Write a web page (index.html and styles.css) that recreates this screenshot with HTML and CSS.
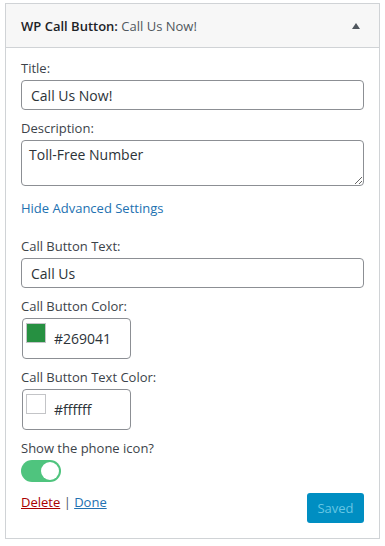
FILE: index.html
```html
<!DOCTYPE html>
<html lang="en">
<head>
    <meta charset="UTF-8">
    <meta name="viewport" content="width=device-width, initial-scale=1.0">
    <title>WP Call Button Widget</title>
    <link rel="stylesheet" href="styles.css">
</head>

<body>
    <div class="widget">
        <div class="widget-top">
            <h3 class="widget-title">WP Call Button: <span class="in-title">Call Us Now!</span></h3>
            <span class="toggle-arrow"></span>
        </div>

        <form class="widget-inside">
            <div class="field">
                <label for="title">Title:</label>
                <input type="text" id="title" value="Call Us Now!">
            </div>

            <div class="field">
                <label for="description">Description:</label>
                <textarea id="description">Toll-Free Number</textarea>
            </div>

            <a href="#" class="advanced-link">Hide Advanced Settings</a>

            <div class="field">
                <label for="buttonText">Call Button Text:</label>
                <input type="text" id="buttonText" value="Call Us">
            </div>

            <div class="field">
                <label>Call Button Color:</label>
                <div class="color-pick">
                    <span class="swatch swatch-green"></span>
                    <span>#269041</span>
                </div>
            </div>

            <div class="field">
                <label>Call Button Text Color:</label>
                <div class="color-pick">
                    <span class="swatch swatch-white"></span>
                    <span>#ffffff</span>
                </div>
            </div>

            <div class="field">
                <label>Show the phone icon?</label>
                <span class="switch"><span class="knob"></span></span>
            </div>

            <div class="widget-actions">
                <div class="action-links">
                    <a href="#" class="delete-link">Delete</a> | <a href="#" class="done-link">Done</a>
                </div>
                <button type="button" class="save-btn" disabled>Saved</button>
            </div>
        </form>
    </div>
</body>
</html>
```

FILE: styles.css
```css
body {
    margin: 0;
    padding: 3px 5px 0 6px;
    font-family: "Open Sans", Arial, sans-serif;
    font-size: 13px;
    line-height: 18px;
    color: #3c434a;
    background: #fff;
}
.widget {
    width: 373px;
    border: 1px solid #d0d3d6;
    margin-left: -1px;
}
.widget-top {
    height: 43px;
    background: #f7f7f7;
    border-bottom: 1px solid #d0d3d6;
    display: flex;
    align-items: center;
    justify-content: space-between;
    padding: 0 19px 0 15px;
}
.widget-title {
    margin: 0;
    font-size: 13px;
    font-weight: 600;
    color: #1d2327;
}
.in-title {
    font-weight: 400;
    color: #50575e;
}
.toggle-arrow {
    width: 0;
    height: 0;
    border-left: 4px solid transparent;
    border-right: 4px solid transparent;
    border-bottom: 6px solid #50575e;
}
.widget-inside {
    padding: 11px 15px 15px;
}
.field {
    margin-bottom: 9px;
}
.field label {
    display: block;
    margin-bottom: 3px;
}
input[type="text"], textarea {
    box-sizing: border-box;
    width: 100%;
    height: 30px;
    padding: 0 9px;
    border: 1px solid #8c8f94;
    border-radius: 4px;
    font-family: inherit;
    font-size: 14px;
    color: #2c3338;
    margin: 0;
    display: block;
}
textarea {
    height: 46px;
    margin-top: 1px;
    padding: 4px 7px;
    line-height: 20px;
}
.advanced-link {
    display: block;
    color: #2271b1;
    text-decoration: none;
    margin: 13px 0 20px;
}
.color-pick {
    box-sizing: border-box;
    width: 109px;
    height: 41px;
    margin: 1px 0 0 1px;
    border: 1px solid #8c8f94;
    border-radius: 4px;
    display: flex;
    align-items: center;
    gap: 8px;
    padding: 0 3px;
    font-size: 14px;
    color: #2c3338;
}
.swatch {
    box-sizing: border-box;
    width: 20px;
    height: 20px;
    border: 1px solid #c3c4c7;
    align-self: flex-start;
    margin-top: 4px;
}
.swatch-green {
    background: #269041;
}
.swatch-white {
    background: #fff;
}
.switch {
    display: flex;
    justify-content: flex-end;
    align-items: center;
    width: 40px;
    height: 22px;
    margin-top: 1px;
    border-radius: 11px;
    background: #4fc47e;
    box-sizing: border-box;
    padding: 2px;
}
.knob {
    width: 18px;
    height: 18px;
    border-radius: 50%;
    background: #fff;
}
.widget-actions {
    display: flex;
    justify-content: space-between;
    align-items: flex-start;
    margin-top: 11px;
}
.action-links {
    color: #50575e;
}
.delete-link {
    color: #a00;
}
.done-link {
    color: #2271b1;
}
.save-btn {
    width: 57px;
    height: 30px;
    border: none;
    border-radius: 3px;
    background: #008ec2;
    color: #66c6e4;
    font-family: inherit;
    font-size: 13px;
    padding: 0;
}
```
